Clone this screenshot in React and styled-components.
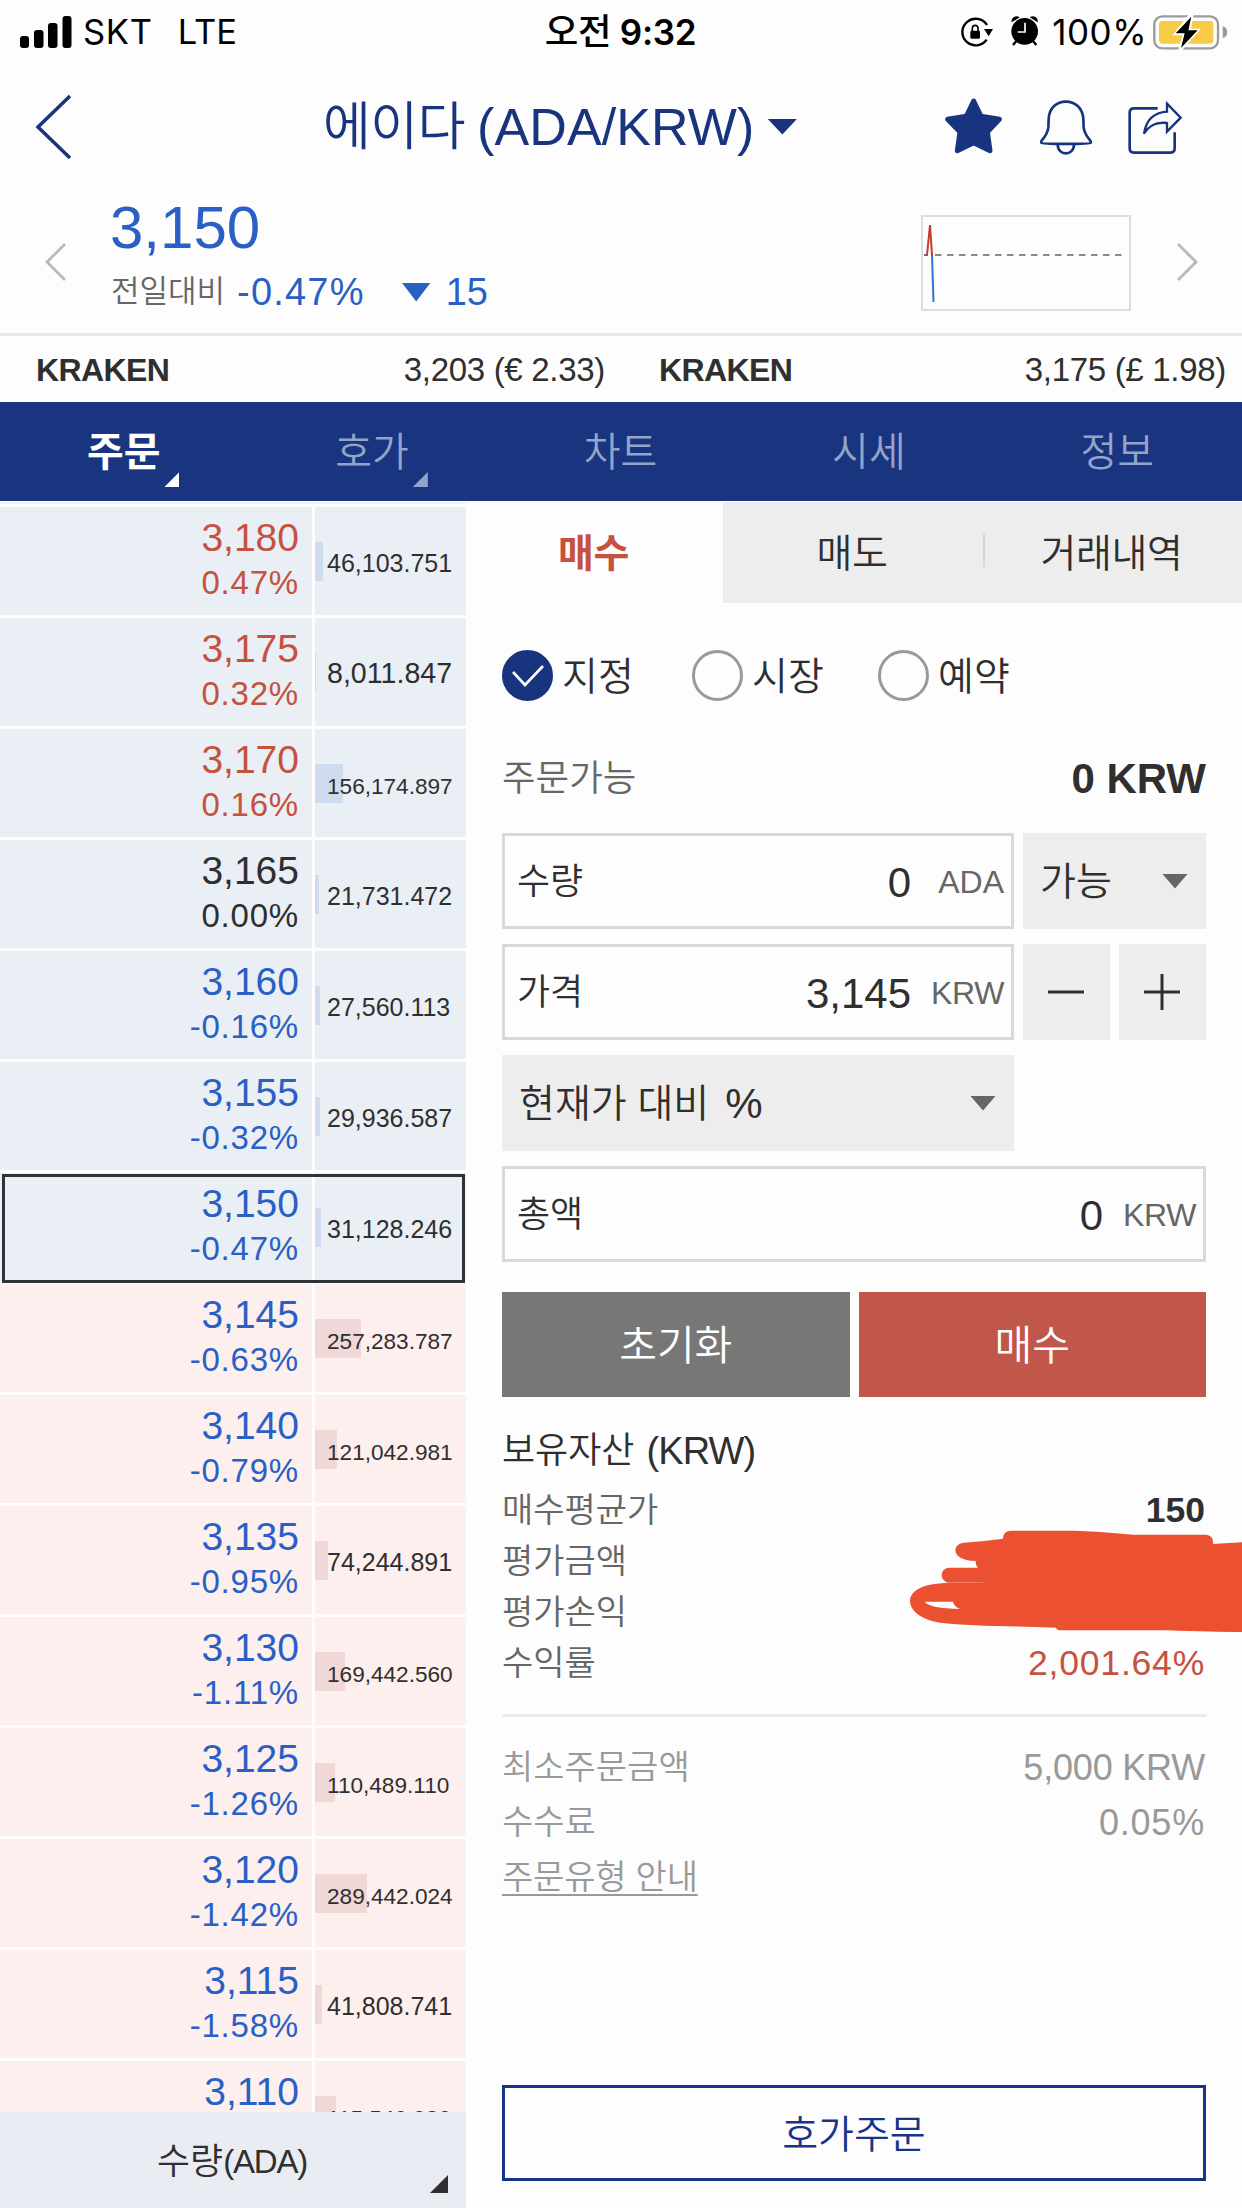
import React, { useState } from 'react';
import styled, { createGlobalStyle, css } from 'styled-components';

const NAVY = '#18347f';
const BLUE = '#2a5fc4';
const RED = '#c5513f';
const GRAY = '#ededed';

const GlobalStyle = createGlobalStyle`
  * {
    box-sizing: border-box;
  }
  body {
    margin: 0;
    background: #fdfdfd;
    color: #2f2f2f;
    font-family: 'Liberation Sans', 'Noto Sans CJK KR', sans-serif;
    font-weight: 350;
  }
  button {
    padding: 0;
    border: 0;
    background: none;
    color: inherit;
    font: inherit;
  }
`;

/** Shared text, size in px */
const Text = styled.span`
  font-size: ${({ $size }) => $size}px;
  letter-spacing: ${({ $track = 0 }) => $track}px;
  color: ${({ $color }) => $color || 'inherit'};
  font-weight: ${({ $bold }) => ($bold ? 700 : 350)};
  white-space: nowrap;
`;

const Screen = styled.div`
  width: 1242px;
  height: 2208px;
  overflow: hidden;
  display: flex;
  flex-direction: column;
`;

/* ---------- status bar ---------- */

const StatusBar = styled.div`
  height: 64px;
  padding: 0 15px 0 20px;
  display: grid;
  grid-template-columns: 1fr auto 1fr;
  align-items: center;
  color: #000;
  font-family: Inter, 'Noto Sans CJK KR', sans-serif;
  line-height: 62px;

  ${Text} {
    font-weight: 400;
  }
`;

const StatusLeft = styled.div`
  display: flex;
  align-items: center;
`;

const Carrier = styled(Text)`
  margin: 0 25px 0 11px;
`;

const Clock = styled.div`
  padding-right: 6px;
  font-size: 35px;
  font-weight: 600;
  letter-spacing: -0.3px;

  span {
    font-weight: 500;
    font-size: 36.5px;
  }
`;

const StatusRight = styled.div`
  display: flex;
  align-items: center;
  justify-content: flex-end;
`;

const StatusGlyphs = styled.svg`
  margin-right: 9px;
`;

const Battery = styled.svg`
  margin-left: 6px;
`;

/* ---------- header ---------- */

const Header = styled.div`
  height: 128px;
  padding-bottom: 3px;
  display: grid;
  grid-template-columns: 323px 622px 1fr;
  align-items: center;
  color: ${NAVY};
`;

const BackIcon = styled.svg`
  margin-left: 34px;
`;

const Title = styled.h1`
  margin: 0;
  display: flex;
  align-items: center;
  font-weight: 350;
  line-height: 60px;
`;

const Pair = styled(Text)`
  margin-left: 12px;
`;

const Caret = styled.i`
  width: ${({ $w }) => $w}px;
  height: ${({ $h }) => $h}px;
  background: ${({ $color }) => $color};
  clip-path: polygon(0 0, 100% 0, 50% 100%);
`;

const TitleCaret = styled(Caret)`
  margin-left: 13px;
`;

/* ---------- quote ---------- */

const Quote = styled.div`
  height: 144px;
  border-bottom: 3px solid #e9e9e9;
  display: grid;
  grid-template-columns: 110px 811px 210px 1fr;
`;

const Arrow = styled.svg`
  margin: 50px 0 0 45px;
`;

const QuoteText = styled.div`
  padding-top: 8px;
  display: flex;
  flex-direction: column;
  gap: 16px;
  color: ${BLUE};
  line-height: 56px;
`;

const Change = styled.div`
  display: flex;
  align-items: center;
  line-height: 40px;
`;

const PrevLabel = styled(Text)`
  padding: 0 0 0 1px;
`;

const ChangeRate = styled(Text)`
  margin: 0 37px 0 12px;
`;

const ChangeCaret = styled(Caret)`
  margin-right: 15px;
`;

const MiniChart = styled.svg`
  margin-top: 23px;
`;

const Exchanges = styled.div`
  height: 66px;
  display: grid;
  grid-template-columns: 1fr 1fr;
  line-height: 68px;
`;

const Exchange = styled.div`
  padding: 0 16px 0 36px;
  display: flex;
  justify-content: space-between;

  & + & {
    padding-left: 38px;
  }
`;

/* ---------- main nav ---------- */

const Nav = styled.nav`
  height: 99px;
  flex: none;
  display: grid;
  grid-template-columns: repeat(5, 1fr);
  background: #1a357f;
`;

const NavItem = styled.button`
  position: relative;
  padding-right: 1px;
  font-size: 40px;
  line-height: 101px;
  color: ${({ $active }) => ($active ? '#fff' : '#94a3c8')};
  font-weight: ${({ $active }) => ($active ? 700 : 350)};
`;

/* folded corner that marks an item with a sub menu */
const Corner = styled.i`
  position: absolute;
  right: ${({ $right }) => $right}px;
  bottom: ${({ $bottom }) => $bottom}px;
  width: ${({ $size }) => $size}px;
  height: ${({ $size }) => $size}px;
  background: currentColor;
  clip-path: polygon(100% 0, 100% 100%, 0 100%);
`;

const Body = styled.div`
  flex: 1;
  min-height: 0;
  padding-top: 1px;
  display: grid;
  grid-template-columns: 466px 1fr;
`;

/* ---------- order book ---------- */

const Book = styled.div`
  min-height: 0;
  display: flex;
  flex-direction: column;
`;

const BookList = styled.div`
  height: 1610px;
  overflow: hidden;
`;

const BookEdge = styled.div`
  height: 2px;
  margin-bottom: 3px;
  background: #f1f5f9;
`;

const BookRow = styled.div`
  height: 108px;
  margin-bottom: 3px;
  display: grid;
  grid-template-columns: 312px 1fr;
  gap: 3px;
  ${({ $current }) => $current && css`
    position: relative;

    &::after {
      content: '';
      position: absolute;
      inset: 1px 1px -2px 2px;
      border: 3px solid #2f3236;
    }
  `}
`;

const PriceCell = styled.div`
  padding: 11px 13px 0 0;
  display: flex;
  flex-direction: column;
  align-items: flex-end;
  gap: 8px;
  background: ${({ $side }) => ($side === 'ask' ? '#e9eff5' : '#fdefee')};
  color: ${({ $color }) => $color};

  ${Text} {
    line-height: 40px;
  }
  ${Text} + ${Text} {
    line-height: 34px;
  }
`;

const VolumeCell = styled.div`
  height: 108px;
  display: grid;
  background: ${({ $side }) => ($side === 'ask' ? '#e9eff5' : '#fdefee')};

  > * {
    grid-area: 1 / 1;
  }
`;

const VolumeBar = styled.div`
  height: 39px;
  margin-top: 35px;
  background: ${({ $side }) => ($side === 'ask' ? '#cfdcf0' : '#efd8d7')};
`;

const Volume = styled.div`
  padding-left: 12px;
  font-size: 25px;
  line-height: 113px;

  span {
    line-height: 1;
  }
`;

const BookFooter = styled.div`
  position: relative;
  height: 96px;
  padding-right: 2px;
  display: flex;
  justify-content: center;
  background: #e9edf3;
  line-height: 100px;
`;

/* ---------- order form ---------- */

const Tabs = styled.div`
  height: 101px;
  display: grid;
  grid-template-columns: 257px 260px 259px;
`;

const Tab = styled.button`
  padding: 0 2px 5px 0;
  display: flex;
  align-items: center;
  justify-content: center;
  font-size: 39px;
  letter-spacing: -0.4px;
  background: ${({ $active }) => ($active ? 'transparent' : GRAY)};
  color: ${({ $active }) => ($active ? RED : 'inherit')};
  font-weight: ${({ $active }) => ($active ? 700 : 350)};
`;

const TabLine = styled(Tab)`
  &::before {
    content: '';
    width: 2px;
    height: 33px;
    margin: 0 56px 0 -58px;
    background: #d6d6d6;
  }
`;

const Form = styled.div`
  padding: 0 36px;
`;

const Radios = styled.div`
  margin-top: 47px;
  height: 51px;
  display: grid;
  grid-template-columns: 190px 186px 1fr;
  line-height: 53px;
`;

const RadioLabel = styled.label`
  display: flex;
  gap: 9px;
`;

const Circle = styled.span`
  width: 51px;
  height: 51px;
  border: 3px solid ${({ $checked }) => ($checked ? NAVY : '#999')};
  border-radius: 50%;
  background: ${({ $checked }) => ($checked ? NAVY : 'transparent')};
  display: flex;
  align-items: center;
  justify-content: center;
`;

const Between = styled.div`
  height: ${({ $h }) => $h}px;
  line-height: ${({ $h }) => $h}px;
  display: flex;
  justify-content: space-between;
`;

const Available = styled(Between)`
  margin: 56px 0 32px;
`;

const Fields = styled.div`
  display: grid;
  grid-template-columns: 512px 87px 87px;
  grid-auto-rows: 96px;
  gap: 15px 9px;
  line-height: 91px;
`;

const Field = styled.div`
  border: 3px solid #d9d9d9;
  padding: 0 7px 0 12px;
  display: flex;
  grid-column: ${({ $wide }) => ($wide ? '1 / -1' : 'auto')};
`;

const FieldValue = styled(Text)`
  margin-left: auto;
  padding-top: 1px;
`;

const FieldUnit = styled(Text)`
  width: 93px;
  padding-top: 1px;
  text-align: right;
`;

const Select = styled.div`
  grid-column: ${({ $span = 1 }) => `span ${$span}`};
  padding: 0 18px 0 17px;
  display: flex;
  align-items: center;
  justify-content: space-between;
  background: ${GRAY};
`;

const SelectLabel = styled.div`
  display: flex;
  gap: 16px;
`;

const Step = styled.button`
  display: flex;
  align-items: center;
  justify-content: center;
  padding-right: 1px;
  background: ${GRAY};
`;

const Spacer = styled.div`
  grid-column: span 2;
`;

const Actions = styled.div`
  margin-top: 30px;
  display: grid;
  grid-template-columns: 1fr 1fr;
  gap: 9px;
`;

const Action = styled.button`
  height: 105px;
  background: ${({ $bg }) => $bg};
  color: #fff;
  font-size: 41px;
  line-height: 109px;
`;

const AssetTitle = styled.div`
  margin: 32px 0 12px;
  height: 44px;
  line-height: 44px;
  display: flex;
  gap: 12px;
`;

const Assets = styled.div`
  position: relative;
  color: #666;
`;

const Amount = styled(Text)`
  margin-right: 1px;
`;

const Scribble = styled.svg`
  position: absolute;
  left: 278px;
  top: 25px;
`;

const Rule = styled.div`
  height: 3px;
  margin: 25px 0 23px;
  background: #ebebeb;
`;

const Fees = styled.div`
  color: #999;
`;

const GuideLink = styled(Text)`
  text-decoration: underline;
  text-decoration-thickness: 2px;
  text-underline-offset: 5px;
  text-decoration-skip-ink: none;
`;

const BookOrder = styled.button`
  width: 100%;
  height: 96px;
  margin-top: 180px;
  border: 3px solid #18348a;
  color: #18348a;
  font-size: 39px;
  line-height: 93px;
`;

/* ---------- data ---------- */

const COLORS = { up: RED, flat: '#2f2f2f', down: BLUE };

const rows = [
  { price: '3,180', rate: '0.47%', volume: '46,103.751', side: 'ask', trend: 'up' },
  { price: '3,175', rate: '0.32%', volume: '8,011.847', side: 'ask', trend: 'up' },
  { price: '3,170', rate: '0.16%', volume: '156,174.897', side: 'ask', trend: 'up' },
  { price: '3,165', rate: '0.00%', volume: '21,731.472', side: 'ask', trend: 'flat' },
  { price: '3,160', rate: '-0.16%', volume: '27,560.113', side: 'ask', trend: 'down' },
  { price: '3,155', rate: '-0.32%', volume: '29,936.587', side: 'ask', trend: 'down' },
  { price: '3,150', rate: '-0.47%', volume: '31,128.246', side: 'ask', trend: 'down', current: true },
  { price: '3,145', rate: '-0.63%', volume: '257,283.787', side: 'bid', trend: 'down' },
  { price: '3,140', rate: '-0.79%', volume: '121,042.981', side: 'bid', trend: 'down' },
  { price: '3,135', rate: '-0.95%', volume: '74,244.891', side: 'bid', trend: 'down' },
  { price: '3,130', rate: '-1.11%', volume: '169,442.560', side: 'bid', trend: 'down' },
  { price: '3,125', rate: '-1.26%', volume: '110,489.110', side: 'bid', trend: 'down' },
  { price: '3,120', rate: '-1.42%', volume: '289,442.024', side: 'bid', trend: 'down' },
  { price: '3,115', rate: '-1.58%', volume: '41,808.741', side: 'bid', trend: 'down' },
  { price: '3,110', volume: '115,540.980', side: 'bid', trend: 'down' },
];

/**
 * font size that keeps a volume inside its cell
 * @param {string} volume
 * @return {number}
 */
const volumeSize = (volume) => {
  if (volume.length > 10) return 22.6;
  return volume.length > 9 ? 25 : 28.6;
};

const barWidth = (volume) => parseFloat(volume.replace(',', '')) / 5580;

const SignalIcon = () => (
  <svg width="52" height="32" viewBox="0 0 52 32">
    <rect x="0" y="20" width="9" height="12" rx="3" />
    <rect x="14" y="14" width="9.5" height="18" rx="3" />
    <rect x="28" y="7" width="9.5" height="25" rx="3" />
    <rect x="42.500" y="0" width="9" height="32" rx="3" />
  </svg>
);

const StatusIcons = () => (
  <StatusGlyphs width="84" height="34" viewBox="90 28 252 102">
    <path d="M174 58 A40 40 0 1 0 173 102" fill="none" stroke="#000" strokeWidth="7" />
    <path d="M165 70 L192 70 L179 92 Z" />
    <rect x="124" y="75" width="29" height="24" rx="4" />
    <path d="M130 77 V68 a8.500 9 0 0 1 17 0 V77" fill="none" stroke="#000" strokeWidth="5" />
    <circle cx="287" cy="77" r="40" />
    <path d="M248 50 a15 15 0 0 1 24 -15 z M326 50 a15 15 0 0 0 -24 -15 z" />
    <path d="M262 106 L252 118 M312 106 L322 118" stroke="#000" strokeWidth="7" />
    <path d="M288 51 V79 H266" fill="none" stroke="#fff" strokeWidth="5" />
  </StatusGlyphs>
);

const BatteryIcon = () => (
  <Battery width="74" height="36" viewBox="668 20 222 108">
    <rect x="672" y="27" width="191" height="96" rx="24" fill="#fff" stroke="#9b9b9b" strokeWidth="7" />
    <rect x="686" y="41" width="163" height="68" rx="10" fill="#f7cb46" />
    <path d="M877 57 a18 18 0 0 1 0 35 z" fill="#9b9b9b" />
    <path d="M776 20 L727 84 H756 L744 128 H756 L812 64 H782 L790 20 Z" fill="#fff" />
    <path d="M783 28 L736 78 H763 L752 122 L802 69 H774 Z" fill="#000" />
  </Battery>
);

const HeaderIcons = () => (
  <svg width="240" height="60" viewBox="45 270 720 180" fill="none" stroke={NAVY} strokeWidth="8">
    <path
      d="M131 282 L153 328 L208 337 L172 375 L180 431 L131 407 L82 431 L90 375 L53 337 L109 328 Z"
      fill={NAVY}
      strokeWidth="15"
      strokeLinejoin="round"
    />
    <path d="M334 407 C329 400 351 392 355 362 L356 337 C357 266 458 266 460 337 L461 362 C465 392 487 400 482 407 C480 412 336 412 334 407 Z" />
    <path d="M383 412 C383 448 432 448 432 412" />
    <path d="M683 304 H612 Q599 304 599 317 V424 Q599 437 612 437 H722 Q734 437 734 424 V376" />
    <path d="M711 290 L752 332 L711 374 V348 C678 344 658 354 642 380 C648 340 668 317 711 314 Z" strokeWidth="7" />
  </svg>
);

const OrderBook = () => (
  <Book>
    <BookList>
      <BookEdge />
      {rows.map(({ price, rate, volume, side, trend, current }) => (
        <BookRow key={price} $current={current}>
          <PriceCell $side={side} $color={COLORS[trend]}>
            <Text $size={39}>{price}</Text>
            {rate && <Text $size={33} $track={0.8}>{rate}</Text>}
          </PriceCell>
          <VolumeCell $side={side}>
            <VolumeBar $side={side} style={{ width: barWidth(volume) }} />
            <Volume>
              <Text $size={volumeSize(volume)}>{volume}</Text>
            </Volume>
          </VolumeCell>
        </BookRow>
      ))}
    </BookList>
    <BookFooter>
      <Text $size={36}>수량</Text>
      <Text $size={33} $track={-1.2}>(ADA)</Text>
      <Corner $right={18} $bottom={15} $size={18} />
    </BookFooter>
  </Book>
);

const OrderForm = () => {
  const [type, setType] = useState('지정');

  return (
    <div>
      <Tabs>
        <Tab $active>매수</Tab>
        <Tab>매도</Tab>
        <TabLine>거래내역</TabLine>
      </Tabs>
      <Form>
        <Radios>
          {['지정', '시장', '예약'].map((label) => (
            <RadioLabel key={label} onClick={() => setType(label)}>
              <Circle $checked={type === label}>
                {type === label && (
                  <svg width="32" height="24" viewBox="0 0 32 24" fill="none" stroke="#fff" strokeWidth="2.600">
                    <path d="M1 8 L13 21 L31 2" />
                  </svg>
                )}
              </Circle>
              <Text $size={39}>{label}</Text>
            </RadioLabel>
          ))}
        </Radios>
        <Available $h={44}>
          <Text $size={36.5} $color="#666">주문가능</Text>
          <Text $size={42} $bold>0 KRW</Text>
        </Available>
        <Fields>
          <Field>
            <Text $size={36}>수량</Text>
            <FieldValue $size={42}>0</FieldValue>
            <FieldUnit $size={32} $color="#666">ADA</FieldUnit>
          </Field>
          <Select $span={2}>
            <Text $size={39}>가능</Text>
            <Caret $w={26} $h={15} $color="#666" />
          </Select>
          <Field>
            <Text $size={36}>가격</Text>
            <FieldValue $size={42}>3,145</FieldValue>
            <FieldUnit $size={32} $track={-0.4} $color="#666">KRW</FieldUnit>
          </Field>
          <Step>
            <svg width="36" height="36" stroke="#2f2f2f" strokeWidth="3">
              <path d="M0 18 H36" />
            </svg>
          </Step>
          <Step>
            <svg width="36" height="36" stroke="#2f2f2f" strokeWidth="3">
              <path d="M0 18 H36 M18 0 V36" />
            </svg>
          </Step>
          <Select>
            <SelectLabel>
              <Text $size={39}>현재가 대비</Text>
              <Text $size={42}>%</Text>
            </SelectLabel>
            <Caret $w={26} $h={15} $color="#666" />
          </Select>
          <Spacer />
          <Field $wide>
            <Text $size={36}>총액</Text>
            <FieldValue $size={42}>0</FieldValue>
            <FieldUnit $size={32} $track={-0.4} $color="#666">KRW</FieldUnit>
          </Field>
        </Fields>
        <Actions>
          <Action $bg="#777">초기화</Action>
          <Action $bg="#c1564b">매수</Action>
        </Actions>
        <AssetTitle>
          <Text $size={36}>보유자산</Text>
          <Text $size={38} $track={-0.9}>(KRW)</Text>
        </AssetTitle>
        <Assets>
          <Between $h={51}>
            <Text $size={34}>매수평균가</Text>
            <Amount $size={35.5} $bold $color="#2f2f2f">150</Amount>
          </Between>
          <Between $h={51}>
            <Text $size={34}>평가금액</Text>
          </Between>
          <Between $h={51}>
            <Text $size={34}>평가손익</Text>
          </Between>
          <Between $h={51}>
            <Text $size={34}>수익률</Text>
            <Amount $size={35.5} $track={0.8} $color={RED}>2,001.64%</Amount>
          </Between>
          <Scribble width="462" height="140" viewBox="0 0 1386 420">
            <path
              d="M690 62 H880 Q950 64 1060 74 H1280 Q1302 78 1299 102 L1386 97 V366 Q1300 366 1160 361 H838 Q829 360 828 353
                C700 348 560 348 480 338 C420 328 390 300 390 272 C392 240 430 218 520 219 H610 V218 H508
                C478 216 477 174 508 173 H594 Q586 166 587 153 C510 152 515 100 553 98 Q610 94 669 86 Q670 64 690 62 Z
                M434 275 C445 290 480 294 540 297 Q522 290 519 275 Z"
              fill="#eb5030"
              fillRule="evenodd"
            />
          </Scribble>
        </Assets>
        <Rule />
        <Fees>
          <Between $h={55}>
            <Text $size={34}>최소주문금액</Text>
            <Amount $size={36} $track={-0.2}>5,000 KRW</Amount>
          </Between>
          <Between $h={55}>
            <Text $size={34}>수수료</Text>
            <Amount $size={36} $track={0.8}>0.05%</Amount>
          </Between>
          <Between $h={55}>
            <GuideLink $size={34} $track={-0.2}>주문유형 안내</GuideLink>
          </Between>
        </Fees>
        <BookOrder>호가주문</BookOrder>
      </Form>
    </div>
  );
};

const App = () => (
  <>
    <GlobalStyle />
    <Screen>
      <StatusBar>
        <StatusLeft>
          <SignalIcon />
          <Carrier $size={34.5} $track={0.7}>SKT</Carrier>
          <Text $size={34.5}>LTE</Text>
        </StatusLeft>
        <Clock><span>오전</span> 9:32</Clock>
        <StatusRight>
          <StatusIcons />
          <Text $size={35} $track={0.5}>100%</Text>
          <BatteryIcon />
        </StatusRight>
      </StatusBar>

      <Header>
        <BackIcon width="40" height="66" viewBox="0 0 40 66" fill="none" stroke={NAVY} strokeWidth="3.500">
          <path d="M36 2 L4 33 L36 64" />
        </BackIcon>
        <Title>
          <Text $size={52} $track={-0.5}>에이다</Text>
          <Pair $size={52} $track={0.1}>(ADA/KRW)</Pair>
          <TitleCaret $w={30} $h={16} $color={NAVY} />
        </Title>
        <HeaderIcons />
      </Header>

      <Quote>
        <Arrow width="22" height="40" fill="none" stroke="#b8b8b8" strokeWidth="2.800">
          <path d="M20 2 L2 20 L20 38" />
        </Arrow>
        <QuoteText>
          <Text $size={60}>3,150</Text>
          <Change>
            <PrevLabel $size={31} $color="#666">전일대비</PrevLabel>
            <ChangeRate $size={38} $track={1.2}>-0.47%</ChangeRate>
            <ChangeCaret $w={29} $h={19} $color={BLUE} />
            <Text $size={38}>15</Text>
          </Change>
        </QuoteText>
        <MiniChart width="210" height="96" fill="none" strokeWidth="2">
          <rect x="1" y="1" width="208" height="94" stroke="#ddd" />
          <path d="M14 40 H204" stroke="#888" strokeDasharray="6.500 5.500" />
          <path d="M3 40 H7" stroke="#2f74d8" />
          <path d="M6 40 L9 10 L11 40" stroke="#c63b30" />
          <path d="M11 40 L12.500 87" stroke="#2f74d8" />
        </MiniChart>
        <Arrow width="22" height="40" fill="none" stroke="#b8b8b8" strokeWidth="2.800">
          <path d="M2 2 L20 20 L2 38" />
        </Arrow>
      </Quote>

      <Exchanges>
        <Exchange>
          <Text $size={32} $track={-0.6} $bold>KRAKEN</Text>
          <Text $size={33} $track={-0.3}>3,203 (€ 2.33)</Text>
        </Exchange>
        <Exchange>
          <Text $size={32} $track={-0.6} $bold>KRAKEN</Text>
          <Text $size={33} $track={-0.3}>3,175 (£ 1.98)</Text>
        </Exchange>
      </Exchanges>

      <Nav>
        <NavItem $active>주문<Corner $right={69} $bottom={16} $size={15} /></NavItem>
        <NavItem>호가<Corner $right={69} $bottom={16} $size={15} /></NavItem>
        <NavItem>차트</NavItem>
        <NavItem>시세</NavItem>
        <NavItem>정보</NavItem>
      </Nav>

      <Body>
        <OrderBook />
        <OrderForm />
      </Body>
    </Screen>
  </>
);

export default App;
